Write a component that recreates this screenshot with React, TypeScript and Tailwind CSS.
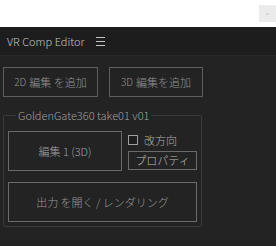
import React from "react";

const font = { fontFamily: '"Noto Sans CJK JP", "Noto Sans", sans-serif' };

export default function App() {
  return (
    <div className="w-[276px] h-[246px] bg-white flex flex-col overflow-hidden" style={font}>
      <div className="h-[27px] shrink-0 flex justify-end items-start pt-[5px]">
        <div className="w-[17px] h-[17px] bg-[#ebebeb] flex items-center justify-center">
          <div className="w-[3px] h-[2px] bg-[#d8d8d8]" />
        </div>
      </div>
      <div className="flex-1 bg-[#232323] flex flex-col">
        <div className="h-[29px] bg-[#1d1d1d] border-b border-[#2a2a2a] flex items-center pl-[7px] text-[11px] text-[#c4c4c4] leading-none font-light">
          <span>VR Comp Editor</span>
          <svg className="ml-[11px]" width="9" height="9" viewBox="0 0 9 9">
            <path d="M0 0.5H9M0 4.5H9M0 8.5H9" stroke="#c4c4c4" strokeWidth="1" />
          </svg>
        </div>
        <div className="px-[3px] pt-[11px] flex flex-col font-light">
          <div className="flex gap-[11px]">
            <button className="w-[95px] h-[30px] border border-[#5e5e5e] text-[11px] text-[#939393] flex items-center justify-center leading-none">
              <span className="text-[10px] mr-[3px]">2D</span>編集 を追加
            </button>
            <button className="w-[94px] h-[30px] border border-[#5e5e5e] text-[11px] text-[#939393] flex items-center justify-center leading-none">
              <span className="text-[10px] mr-[3px]">3D</span>編集を追加
            </button>
          </div>
          <fieldset className="mt-[11px] w-[199px] border border-[#3a3a3a] rounded-[2px] px-[4px] pt-[9px] pb-[4px]">
            <legend className="ml-[8px] px-[2px] text-[11px] leading-[14px] text-[#a0a0a0]">
              GoldenGate360 take01 v01
            </legend>
            <div className="flex gap-[6px]">
              <button className="w-[114px] h-[40px] border border-[#6a6a6a] text-[11px] text-[#a0a0a0] flex items-center justify-center leading-none">
                編集 1 (3D)
              </button>
              <div className="flex flex-col pt-[4px]">
                <label className="flex items-center gap-[6px] h-[10px] text-[11px] text-[#b0b0b0] leading-none">
                  <span className="w-[10px] h-[10px] border border-[#a0a0a0] bg-[#1e1e1e]" />
                  改方向
                </label>
                <button className="mt-[6px] w-[69px] h-[19px] border border-[#6a6a6a] text-[11px] text-[#bcbcbc] flex items-center justify-center leading-none">
                  プロパティ
                </button>
              </div>
            </div>
            <button className="mt-[11px] w-[189px] h-[40px] border border-[#6a6a6a] text-[11px] text-[#999999] flex items-center justify-center leading-none">
              出力 を開く / レンダリング
            </button>
          </fieldset>
        </div>
      </div>
    </div>
  );
}
